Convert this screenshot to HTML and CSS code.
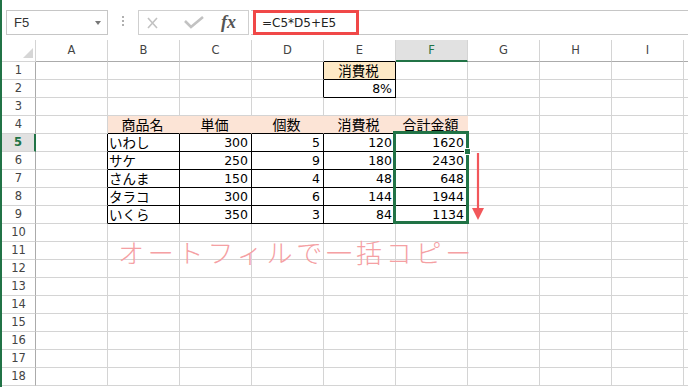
FILE: index.html
```html
<!DOCTYPE html>
<html lang="ja">
<head>
    <meta charset="UTF-8">
    <meta name="viewport" content="width=device-width, initial-scale=1.0">
    <title>オートフィル</title>
    <link rel="stylesheet" href="styles.css">
</head>
<body>
    <div class="toolbar">
        <div class="namebox">
            <span>F5</span>
            <span class="caret"></span>
        </div>
        <div class="grip"><i></i><i></i><i></i></div>
        <div class="fxbox">
            <svg class="btn-cancel" width="11" height="12" viewBox="0 0 11 12">
                <path d="M1 1 L10 11 M10 1 L1 11" stroke="#c2c2c2" stroke-width="1.6" fill="none"/>
            </svg>
            <svg class="btn-enter" width="20" height="13" viewBox="0 0 20 13">
                <path d="M1 5 L7 11 L19 1" stroke="#c2c2c2" stroke-width="2.6" fill="none"/>
            </svg>
            <span class="fx">fx</span>
        </div>
        <div class="formula">
            <span class="formula-hl">=C5*D5+E5</span>
        </div>
    </div>

    <div class="sheet" id="sheet">
        <div class="selection"></div>
        <div class="handle"></div>
        <svg class="arrow" width="14" height="68" viewBox="0 0 14 68">
            <path d="M7 0 V58" stroke="#f2575b" stroke-width="2.2" fill="none"/>
            <polygon points="1,55 13,55 7,67" fill="#f2575b"/>
        </svg>
        <div class="note">オートフィルで一括コピー</div>
    </div>

    <script>
        const letters = ['A', 'B', 'C', 'D', 'E', 'F', 'G', 'H', 'I', ''];
        const headers = ['商品名', '単価', '個数', '消費税', '合計金額'];
        const items = [
            ['いわし', 300, 5, 120, 1620],
            ['サケ', 250, 9, 180, 2430],
            ['さんま', 150, 4, 48, 648],
            ['タラコ', 300, 6, 144, 1944],
            ['いくら', 350, 3, 84, 1134]
        ];

        // values keyed by "row,col" (A = 1)
        const values = { '1,5': '消費税', '2,5': '8%' };
        headers.forEach((h, i) => values[`4,${i + 2}`] = h);
        items.forEach((row, r) => row.forEach((v, i) => values[`${r + 5},${i + 2}`] = v));

        function boxed(r, c) {
            return (r >= 5 && r <= 9 && c >= 2 && c <= 6) || (r >= 1 && r <= 2 && c === 5);
        }

        const sheet = document.getElementById('sheet');
        for (let r = 0; r <= 18; r++) {
            for (let c = 0; c <= 10; c++) {
                const cell = document.createElement('div');
                const cls = [];
                if (r === 0 && c === 0) {
                    cls.push('corner');
                } else if (r === 0) {
                    cls.push('col-head');
                    if (c === 6) cls.push('active');
                    cell.textContent = letters[c - 1];
                } else if (c === 0) {
                    cls.push('row-head');
                    if (r === 5) cls.push('active');
                    cell.textContent = r;
                } else {
                    cls.push('cell');
                    const v = values[`${r},${c}`];
                    if (v !== undefined) {
                        cell.textContent = v;
                        cls.push(typeof v === 'number' || v === '8%' ? 'num' : 'text');
                    }
                    if (r === 4 && c >= 2 && c <= 6) cls.push('th');
                    if (r === 1 && c === 5) cls.push('tax');
                }
                if (boxed(r, c) || boxed(r, c + 1)) cls.push('edge-r');
                if (boxed(r, c) || boxed(r + 1, c)) cls.push('edge-b');
                cell.className = cls.join(' ');
                cell.style.gridArea = `${r + 1} / ${c + 1}`;
                sheet.appendChild(cell);
            }
        }
    </script>
</body>
</html>
```

FILE: styles.css
```css
* {
    box-sizing: border-box;
}

body {
    margin: 0;
    height: 387px;
    overflow: hidden;
    background: #fff;
    border-left: 2px solid #217346;
    font-family: "DejaVu Sans", "Noto Sans CJK JP", sans-serif;
    color: #222;
}

/* formula bar */

.toolbar {
    display: flex;
    align-items: flex-start;
    height: 40px;
    padding-top: 10px;
}

.namebox {
    display: flex;
    align-items: center;
    justify-content: space-between;
    width: 102px;
    height: 25px;
    margin-left: 4px;
    padding: 0 6px 0 7px;
    border: 1px solid #c6c6c6;
    font-family: "Liberation Sans", sans-serif;
    font-size: 13px;
    color: #333;
}

.caret {
    border-left: 3.5px solid transparent;
    border-right: 3.5px solid transparent;
    border-top: 4px solid #777;
}

.grip {
    display: flex;
    flex-direction: column;
    gap: 2px;
    margin-left: 14px;
    padding-top: 6px;
}

.grip i {
    width: 2px;
    height: 2px;
    background: #b0b0b0;
}

.fxbox {
    display: flex;
    align-items: center;
    width: 111px;
    height: 25px;
    margin-left: 14px;
    padding-left: 8px;
    border: 1px solid #cfcfcf;
}

.btn-enter {
    margin-left: 26px;
}

.fx {
    margin-left: 17px;
    font-family: "Liberation Serif", serif;
    font-style: italic;
    font-weight: bold;
    font-size: 18px;
    color: #555;
}

.formula {
    display: flex;
    flex: 1;
    height: 25px;
    margin-left: 2px;
    padding-left: 2px;
    border-top: 1px solid #c6c6c6;
    border-bottom: 1px solid #c6c6c6;
}

.formula-hl {
    display: flex;
    align-items: center;
    width: 106px;
    height: 25px;
    margin-top: -1px;
    padding-left: 6px;
    border: 3px solid #f04848;
    font-size: 12px;
    color: #222;
}

/* worksheet */

.sheet {
    display: grid;
    grid-template-columns: 34px repeat(10, 72px);
    grid-template-rows: 22px repeat(19, 18px);
    height: 347px;
    overflow: hidden;
}

.sheet > div {
    border-right: 1px solid #d4d4d4;
    border-bottom: 1px solid #d4d4d4;
    white-space: nowrap;
}

.corner {
    display: flex;
    justify-content: flex-end;
    align-items: flex-end;
    padding: 0 2px 3px 0;
}

.corner::after {
    content: "";
    border-left: 10px solid transparent;
    border-bottom: 10px solid #d6d6d6;
}

.sheet .col-head {
    border-bottom-color: #ababab;
    text-align: center;
    font-size: 11.5px;
    line-height: 21px;
    color: #444;
}

.sheet .col-head.active {
    background: #e1e1e1;
    border-bottom: 2px solid #217346;
    color: #217346;
}

.sheet .row-head {
    border-right-color: #ababab;
    text-align: center;
    font-size: 11.5px;
    line-height: 17px;
    color: #444;
}

.sheet .row-head.active {
    background: #e1e1e1;
    border-right: 2px solid #217346;
    color: #217346;
    font-weight: bold;
}

.cell {
    padding: 0 3px 0 1px;
    line-height: 17px;
    color: #000;
}

.cell.num {
    text-align: right;
    font-size: 12.5px;
}

.cell.text {
    font-family: "Noto Sans CJK JP", sans-serif;
    font-size: 13.5px;
}

.sheet .cell.th {
    background: #fce4d6;
    border-right-color: #fce4d6;
    text-align: center;
    font-size: 14px;
}

.cell.tax {
    background: #fde9c6;
    text-align: center;
}

.sheet .edge-r {
    border-right-color: #000;
}

.sheet .edge-b {
    border-bottom-color: #000;
}

/* overlays on the grid */

.sheet .selection {
    grid-column: 7;
    grid-row: 6 / 11;
    margin: -3px -1px 0 -3px;
    border: 3px solid #217346;
    position: relative;
    z-index: 2;
}

.sheet .handle {
    grid-column: 7;
    grid-row: 6;
    justify-self: end;
    align-self: end;
    width: 5px;
    height: 5px;
    margin: 0 -2px -2px 0;
    background: #217346;
    border: none;
    box-shadow: 0 0 0 1px #fff;
    position: relative;
    z-index: 3;
}

.arrow {
    grid-column: 8;
    grid-row: 6 / 11;
    align-self: start;
    justify-self: start;
    margin: 19px 0 0 3px;
    position: relative;
    z-index: 2;
}

.sheet .note {
    grid-column: 3 / 9;
    grid-row: 12 / 14;
    align-self: start;
    margin-top: -3px;
    padding-left: 10px;
    border: none;
    font-family: "Noto Sans CJK JP", sans-serif;
    font-weight: 300;
    font-size: 26px;
    line-height: 26px;
    letter-spacing: 3.8px;
    color: #f5a0a3;
    position: relative;
    z-index: 2;
}
```
